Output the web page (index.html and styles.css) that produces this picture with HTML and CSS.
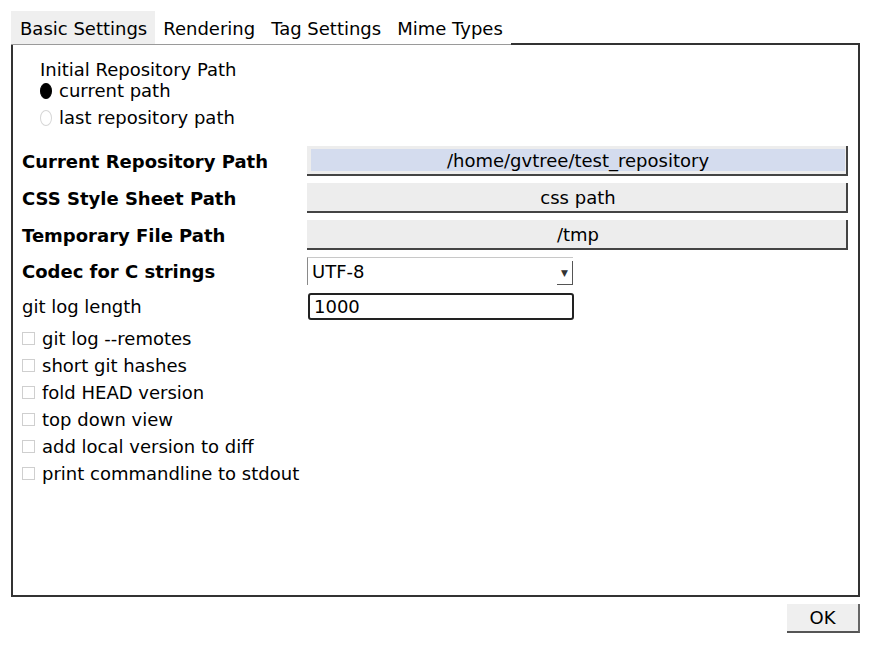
FILE: index.html
```html
<!DOCTYPE html>
<html>
<head>
<meta charset="utf-8">
<link rel="stylesheet" href="styles.css">
</head>
<body>
<div class="dialog">
  <div class="tabs">
    <div class="tab active">Basic Settings</div>
    <div class="tab">Rendering</div>
    <div class="tab">Tag Settings</div>
    <div class="tab">Mime Types</div>
    <div class="tab-fill"></div>
  </div>
  <div class="panel">
    <div class="group">
      <div class="group-title">Initial Repository Path</div>
      <div class="radio-row"><span class="radio checked"></span><span>current path</span></div>
      <div class="radio-row"><span class="radio"></span><span>last repository path</span></div>
    </div>
    <div class="field">
      <div class="label">Current Repository Path</div>
      <div class="pbutton focused"><span class="pinner">/home/gvtree/test_repository</span></div>
    </div>
    <div class="field">
      <div class="label">CSS Style Sheet Path</div>
      <div class="pbutton"><span class="pinner">css path</span></div>
    </div>
    <div class="field">
      <div class="label">Temporary File Path</div>
      <div class="pbutton"><span class="pinner">/tmp</span></div>
    </div>
    <div class="field field-select">
      <div class="label">Codec for C strings</div>
      <div class="select"><span class="select-text">UTF-8</span><span class="select-arrow">▼</span></div>
    </div>
    <div class="field field-input">
      <div class="label normal">git log length</div>
      <div class="input">1000</div>
    </div>
    <div class="checks">
      <div class="check-row"><span class="checkbox"></span><span>git log --remotes</span></div>
      <div class="check-row"><span class="checkbox"></span><span>short git hashes</span></div>
      <div class="check-row"><span class="checkbox"></span><span>fold HEAD version</span></div>
      <div class="check-row"><span class="checkbox"></span><span>top down view</span></div>
      <div class="check-row"><span class="checkbox"></span><span>add local version to diff</span></div>
      <div class="check-row"><span class="checkbox"></span><span>print commandline to stdout</span></div>
    </div>
  </div>
  <div class="footer">
    <div class="ok">OK</div>
  </div>
</div>
</body>
</html>
```
FILE: styles.css
```css
html, body {
  margin: 0;
  padding: 0;
  background: #ffffff;
}
body {
  font-family: "DejaVu Sans", sans-serif;
  font-size: 18px;
  color: #000;
}
.dialog {
  padding: 11px 11px 0 11px;
}
.tabs {
  display: flex;
  height: 34px;
}
.tab {
  height: 31px;
  padding: 2px 8px 0 8px;
  line-height: 31px;
  border-bottom: 1px solid #9a9a9a;
  white-space: nowrap;
}
.tab.active {
  background: #efefef;
  padding-left: 9px;
}
.tab-fill {
  flex: 1;
  height: 32px;
  border-bottom: 2px solid #333;
}
.panel {
  box-sizing: border-box;
  height: 552px;
  border: 2px solid #333;
  border-top: none;
  padding: 14px 9px 0 9px;
}
.group {
  margin-left: 18px;
  margin-bottom: 15px;
}
.group-title {
  line-height: 22px;
  margin-bottom: -4px;
}
.radio-row {
  display: flex;
  align-items: center;
  height: 27px;
  gap: 7px;
}
.radio {
  box-sizing: border-box;
  width: 12px;
  height: 16px;
  border-radius: 50%;
  border: 1.5px solid #d6d6d6;
  background: #fff;
}
.radio.checked {
  background: #000;
  border-color: #000;
}
.field {
  display: flex;
  align-items: center;
  height: 30px;
  margin-bottom: 7px;
}
.field-select {
  height: 28px;
  margin-bottom: 8px;
}
.field-input {
  height: 27px;
  margin-bottom: 0;
}
.label {
  width: 285px;
  font-weight: bold;
  white-space: nowrap;
}
.label.normal {
  font-weight: normal;
}
.pbutton {
  box-sizing: border-box;
  width: 541px;
  height: 30px;
  background: #ededed;
  border-right: 2px solid #444;
  border-bottom: 2px solid #444;
  padding: 3px 1px 3px 4px;
  display: flex;
}
.pinner {
  flex: 1;
  display: flex;
  align-items: center;
  justify-content: center;
}
.pbutton.focused .pinner {
  background: #d4dcee;
}
.select {
  box-sizing: border-box;
  width: 266px;
  height: 28px;
  border-top: 1px solid #c8c8c8;
  border-left: 1px solid #8a8a8a;
  display: flex;
  align-items: stretch;
  background: #fff;
}
.select-text {
  flex: 1;
  padding-left: 4px;
  display: flex;
  align-items: center;
}
.select-arrow {
  box-sizing: border-box;
  width: 16px;
  margin: 3px 0 0 0;
  border-right: 1px solid #555;
  border-bottom: 1px solid #555;
  font-size: 9px;
  color: #333;
  display: flex;
  align-items: center;
  justify-content: center;
}
.input {
  box-sizing: border-box;
  width: 266px;
  height: 27px;
  margin-left: 1px;
  border: 2px solid #222;
  border-radius: 3px;
  padding-left: 4px;
  display: flex;
  align-items: center;
}
.checks {
  margin-top: 5px;
}
.check-row {
  display: flex;
  align-items: center;
  height: 27px;
  gap: 7px;
}
.checkbox {
  box-sizing: border-box;
  width: 13px;
  height: 13px;
  border: 1px solid #cfcfcf;
  background: #fff;
}
.footer {
  display: flex;
  justify-content: flex-end;
  padding-top: 7px;
}
.ok {
  box-sizing: border-box;
  width: 73px;
  height: 29px;
  background: #efefef;
  border-right: 2px solid #666;
  border-bottom: 2px solid #555;
  display: flex;
  align-items: center;
  justify-content: center;
}
```
